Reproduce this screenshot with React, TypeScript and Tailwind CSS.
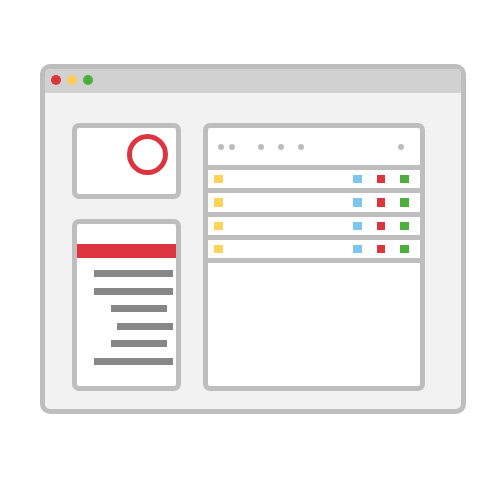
const rows = [0, 1, 2, 3];

const lines = [
  { ml: 'ml-[17px]', w: 'w-[79px]' },
  { ml: 'ml-[17px]', w: 'w-[79px]' },
  { ml: 'ml-[34px]', w: 'w-[56px]' },
  { ml: 'ml-[40px]', w: 'w-[56px]' },
  { ml: 'ml-[34px]', w: 'w-[56px]' },
  { ml: 'ml-[17px]', w: 'w-[79px]' },
];

function Dot({ className = '' }: { className?: string }) {
  return <div className={`w-[6px] h-[6px] rounded-full bg-[#bdbdbd] ${className}`} />;
}

function Square({ color }: { color: string }) {
  return <div className={`w-[8.5px] h-[8.5px] ${color}`} />;
}

export default function App() {
  return (
    <div className="w-[500px] h-[500px] bg-white pt-[64px] pl-[40px]">
      <div className="w-[426px] h-[350px] border-[5px] border-[#bebebe] rounded-[10px] overflow-hidden bg-[#f2f2f2] flex flex-col">
        {/* title bar */}
        <div className="h-[24px] bg-[#d1d1d1] flex items-center pl-[6px] pb-[2px] gap-[6px]">
          <div className="w-[10px] h-[10px] rounded-full bg-[#dc3540]" />
          <div className="w-[10px] h-[10px] rounded-full bg-[#fdcd5c]" />
          <div className="w-[10px] h-[10px] rounded-full bg-[#4cae3c]" />
        </div>

        {/* body */}
        <div className="flex-1 flex pt-[30px] pl-[27px] gap-[22px]">
          <div className="w-[109px] h-[268px] flex flex-col gap-[20px]">
            <div className="h-[76px] bg-white border-[5px] border-[#bebebe] rounded-[7px] flex justify-end items-start pt-[6px] pr-[8px]">
              <div className="w-[41px] h-[41px] rounded-full border-[5px] border-[#dc3540]" />
            </div>
            <div className="h-[172px] bg-white border-[5px] border-[#bebebe] rounded-[7px] pt-[20px]">
              <div className="h-[14px] bg-[#dc3540]" />
              <div className="flex flex-col gap-[10.6px] mt-[12px]">
                {lines.map((l, i) => (
                  <div key={i} className={`h-[7px] bg-[#878787] ${l.ml} ${l.w}`} />
                ))}
              </div>
            </div>
          </div>

          <div className="w-[222px] h-[268px] bg-white border-[5px] border-[#bebebe] rounded-[7px] flex flex-col">
            <div className="h-[37px] flex items-center pl-[10px] pr-[15.7px]">
              <Dot />
              <Dot className="ml-[4.7px]" />
              <Dot className="ml-[23.6px]" />
              <Dot className="ml-[14px]" />
              <Dot className="ml-[14px]" />
              <div className="flex-1" />
              <Dot />
            </div>
            {rows.map((r) => (
              <div key={r} className="h-[23.33px] border-t-[5px] border-[#bebebe] flex items-center pl-[6px] pr-[11.5px]">
                <Square color="bg-[#fdd35c]" />
                <div className="flex-1" />
                <div className="flex gap-[14.8px]">
                  <Square color="bg-[#7cc8ec]" />
                  <Square color="bg-[#dc3540]" />
                  <Square color="bg-[#4cae3c]" />
                </div>
              </div>
            ))}
            <div className="border-t-[5px] border-[#bebebe]" />
          </div>
        </div>
      </div>
    </div>
  );
}
